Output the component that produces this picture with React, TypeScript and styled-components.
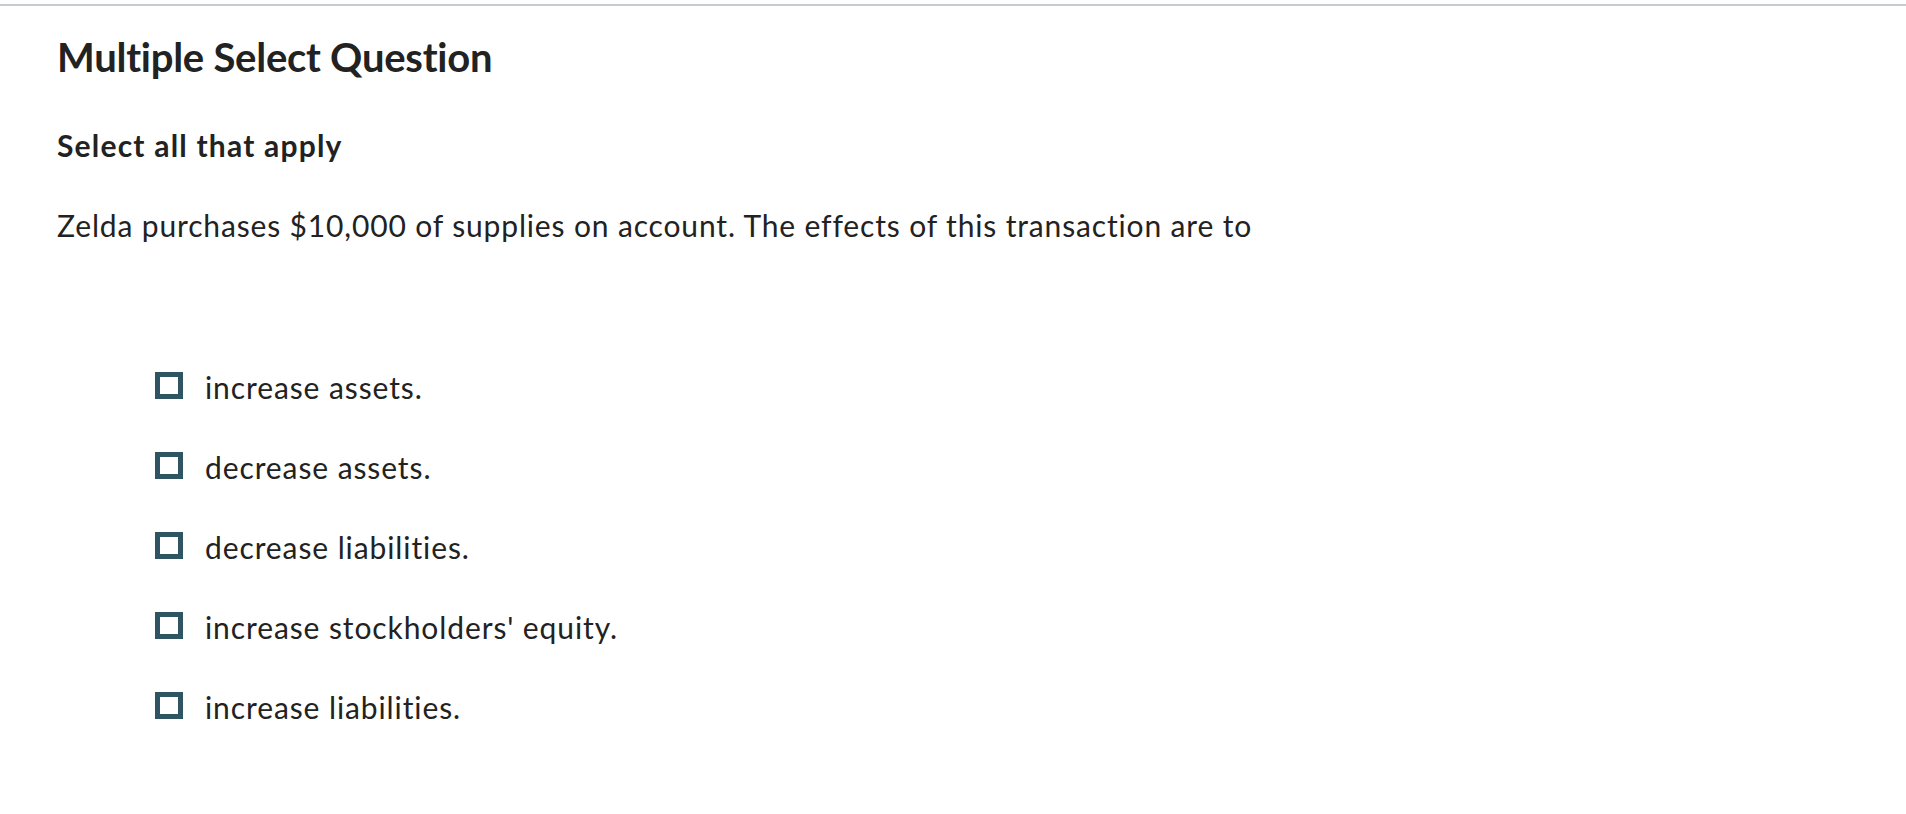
import React from "react"
import styled, {createGlobalStyle} from "styled-components"

const GlobalStyle = createGlobalStyle`
  body {
    margin: 0;
    background: #ffffff;
    font-family: Lato, "Open Sans", sans-serif;
    font-variant-ligatures: none;
    color: #222222;
  }
`

const Page = styled.main`
  margin-top: 4px;
  border-top: 2px solid #c2ccd1;
  padding: 0 57px 40px 57px;
`

const Title = styled.h1`
  margin: 27px 0 0 0;
  font-size: 40px;
  line-height: 48px;
  font-weight: 700;
  letter-spacing: -0.25px;
`

const Prompt = styled.h2`
  margin: 47px 0 0 0;
  font-size: 30px;
  line-height: 35px;
  font-weight: 700;
  letter-spacing: 1.2px;
`

const Question = styled.p`
  margin: 44px 0 0 0;
  font-size: 30px;
  line-height: 36px;
  font-weight: 400;
  letter-spacing: 0.85px;
`

const Options = styled.ul`
  list-style: none;
  margin: 126px 0 0 0;
  padding: 0 0 0 98px;
  display: flex;
  flex-direction: column;
  gap: 44px;
`

const Option = styled.li`
  display: flex;
  align-items: flex-start;
  gap: 22px;
  font-size: 30px;
  line-height: 36px;
  letter-spacing: 0.9px;
`

const Box = styled.span`
  flex: none;
  box-sizing: border-box;
  width: 28px;
  height: 27px;
  margin-top: 3px;
  border: 5px solid #2f5564;
  background: #ffffff;
`

const choices = [
  "increase assets.",
  "decrease assets.",
  "decrease liabilities.",
  "increase stockholders' equity.",
  "increase liabilities.",
]

export default function App() {
  return (
    <>
      <GlobalStyle />
      <Page>
        <Title>Multiple Select Question</Title>
        <Prompt>Select all that apply</Prompt>
        <Question>
          Zelda purchases $10,000 of supplies on account. The effects of this transaction are to
        </Question>
        <Options>
          {choices.map(choice => (
            <Option key={choice}>
              <Box />
              <span>{choice}</span>
            </Option>
          ))}
        </Options>
      </Page>
    </>
  )
}
